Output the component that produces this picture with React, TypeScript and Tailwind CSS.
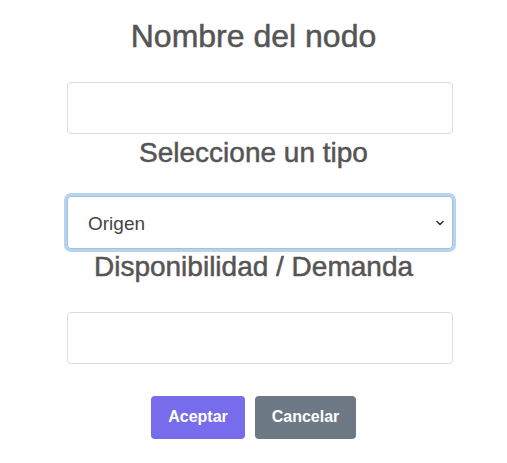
import React, { useState } from 'react';

export default function App() {
  const [name, setName] = useState('');
  const [tipo, setTipo] = useState('origen');
  const [cantidad, setCantidad] = useState('');

  return (
    <div className="min-h-[463px] w-[507px] bg-white font-['Liberation_Sans',Arial,sans-serif] text-[#555]">
      <form onSubmit={(e) => e.preventDefault()} className="flex flex-col pt-[17px]">
        <h2 className="text-center text-[32px] leading-[38.4px] [-webkit-text-stroke:0.5px_#555]">Nombre del nodo</h2>
        <div className="mt-[27px] pl-[67px] pr-[54px]">
          <input
            type="text"
            value={name}
            onChange={(e) => setName(e.target.value)}
            className="h-[52px] w-full rounded-[4px] border border-[#dcdcdc] bg-white px-5 text-[18px] text-[#444] outline-none"
          />
        </div>

        <h3 className="mt-[2px] text-center text-[28px] leading-[33.6px] [-webkit-text-stroke:0.5px_#555]">Seleccione un tipo</h3>
        <div className="relative mt-[26px] pl-[67px] pr-[54px]">
          <select
            value={tipo}
            onChange={(e) => setTipo(e.target.value)}
            className="h-[53px] w-full appearance-none rounded-[4px] border border-[#9fc2e3] bg-white pl-5 pt-[4px] text-[19px] text-[#444] shadow-[0_0_0_3px_#b9d3ec] outline-none"
          >
            <option value="origen">Origen</option>
            <option value="destino">Destino</option>
            <option value="transbordo">Transbordo</option>
          </select>
          <svg
            className="pointer-events-none absolute right-[62px] top-[22px]"
            width="10"
            height="10"
            viewBox="0 0 10 10"
            fill="none"
            stroke="#333"
            strokeWidth="1.6"
            strokeLinecap="round"
            strokeLinejoin="round"
          >
            <path d="M2 3.5 5 6.5 8 3.5" />
          </svg>
        </div>

        <h3 className="mt-[1px] text-center text-[28px] leading-[33.6px] [-webkit-text-stroke:0.5px_#555]">Disponibilidad / Demanda</h3>
        <div className="mt-[28px] pl-[67px] pr-[54px]">
          <input
            type="number"
            value={cantidad}
            onChange={(e) => setCantidad(e.target.value)}
            className="h-[52px] w-full rounded-[4px] border border-[#dcdcdc] bg-white px-5 text-[18px] text-[#444] outline-none"
          />
        </div>

        <div className="mt-[32px] flex justify-center gap-[10px]">
          <button
            type="submit"
            className="h-[43px] w-[94px] rounded-[4px] bg-[#776ceb] text-[16px] font-bold text-white"
          >
            Aceptar
          </button>
          <button
            type="button"
            className="h-[43px] w-[101px] rounded-[4px] bg-[#6d7a86] text-[16px] font-bold text-white"
          >
            Cancelar
          </button>
        </div>
      </form>
    </div>
  );
}
